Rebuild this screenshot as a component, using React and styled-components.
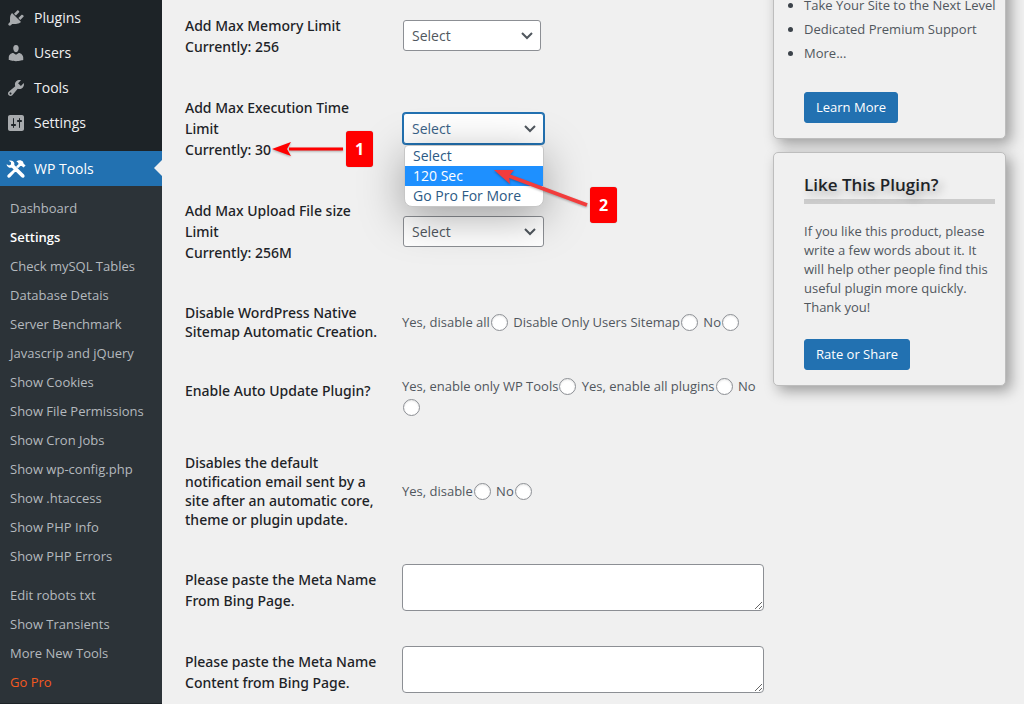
import React from 'react'

import styled, { createGlobalStyle } from "styled-components";

const Global = createGlobalStyle`
*{
box-sizing:border-box;
}
body{
margin:0;
background-color:#f0f0f0;
color:#50575e;
font-family:"Segoe UI","Open Sans","Noto Sans",sans-serif;
font-size:14px;
line-height:21px;
}
`
const Page = styled.div`
display:flex;
height:100vh;
overflow:hidden;
`
const Sidebar = styled.nav`
width:162px;
flex-shrink:0;
background-color:#1d2327;
`
const List = styled.ul`
list-style:none;
margin:0;
padding:0;
`
const MenuLink = styled.a`
position:relative;
display:flex;
align-items:center;
gap:8px;
height:35px;
padding-left:6px;
color:${({$current})=>$current ? "#fff" : "#f0f0f1"};
background-color:${({$current})=>$current ? "#2271b1" : "transparent"};
margin-top:${({$current})=>$current ? "11px" : "0"};
text-decoration:none;
svg{
color:${({$current})=>$current ? "#fff" : "#a7aaad"};
}
`
const Notch = styled.span`
position:absolute;
right:0;
top:9px;
border:8px solid transparent;
border-right-color:#f0f0f0;
border-left-width:0;
`
const SubMenu = styled(List)`
background-color:#2c3338;
padding:8px 0 6px;
`
const SubItem = styled.li`
margin-top:${({$spaced})=>$spaced ? "10px" : "0"};
`
const SubLink = styled.a`
display:block;
padding-left:10px;
font-size:13px;
line-height:29px;
text-decoration:none;
color:${({$color})=>$color || "#b4b9be"};
font-weight:${({$bold})=>$bold ? 600 : 400};
`
const Main = styled.main`
flex:1;
display:grid;
grid-template-columns:1fr 233px;
align-items:start;
gap:9px;
padding:0 18px 0 23px;
`
/* both columns are scrolled a little past their top */
const Form = styled.form`
margin-top:-5px;
`
const Row = styled.div`
position:relative;
display:grid;
grid-template-columns:217px 1fr;
`
const Label = styled.label`
padding:20px 0;
color:#1d2327;
font-family:"Segoe UI","Noto Sans","Open Sans",sans-serif;
font-weight:500;
line-height:${({$tight})=>$tight ? "19px" : "21px"};
`
const Field = styled.div`
align-self:${({$top})=>$top ? "start" : "center"};
padding:15px 0;
font-size:${({$small})=>$small ? "13px" : "14px"};
`
const SelectBox = styled.div`
position:relative;
width:${({$wide})=>$wide ? "141px" : "138px"};
margin:0 0 1px 1px;
svg{
position:absolute;
right:8px;
top:10px;
pointer-events:none;
}
`
const Select = styled.select`
display:block;
appearance:none;
width:100%;
height:31px;
padding:0 24px 0 8px;
border:1px solid ${({$open})=>$open ? "#2271b1" : "#8c8f94"};
border-radius:3px;
box-shadow:${({$open})=>$open ? "0 0 0 1px #2271b1" : "none"};
outline:none;
background-color:#fff;
color:${({$open})=>$open ? "#3a6287" : "#50575e"};
font:inherit;
`
const Options = styled.ul`
position:absolute;
z-index:1;
top:32px;
left:1px;
right:0;
margin:0;
padding:0;
list-style:none;
overflow:hidden;
background-color:#fff;
border:1px solid #c6c6c6;
border-radius:4px 4px 8px 8px;
box-shadow:0 10px 44px rgba(0,0,0,.34);
`
const Option = styled.li`
padding-left:8px;
line-height:20px;
color:${({$active})=>$active ? "#fff" : "#2c5a85"};
background-color:${({$active})=>$active ? "#1e90ff" : "transparent"};
`
const Radio = styled.input`
appearance:none;
width:17px;
height:17px;
margin:0 2px 0 1px;
vertical-align:-4px;
border:1px solid #8c8f94;
border-radius:50%;
background-color:#fff;
box-shadow:inset 0 1px 2px rgba(0,0,0,.1);
`
const TextArea = styled.textarea`
display:block;
width:100%;
height:47px;
border:1px solid #8c8f94;
border-radius:4px;
background-color:#fff;
`
const Marks = styled.svg`
position:absolute;
z-index:2;
top:0;
left:0;
overflow:visible;
pointer-events:none;
filter:drop-shadow(0 1px 1px rgba(0,0,0,.3));
`
const Badge = styled.span`
position:absolute;
z-index:2;
top:${({$top})=>$top}px;
left:${({$left})=>$left}px;
width:27px;
height:36px;
border-radius:3px;
background-color:#f00;
color:#fff;
font-size:16px;
font-weight:700;
line-height:36px;
text-align:center;
box-shadow:0 0 1px rgba(0,0,0,.4);
`
const Aside = styled.aside`
display:flex;
flex-direction:column;
gap:13px;
margin-top:-22px;
font-size:13px;
line-height:19px;
`
const Card = styled.section`
padding:14px 10px 15px 30px;
border:1px solid #bdbdbd;
border-radius:5px;
background-color:#f0f0f0;
box-shadow:5px 5px 14px rgba(0,0,0,.35);
`
const Bullets = styled.ul`
margin:0 0 27px;
padding:0;
line-height:24px;
white-space:nowrap;
li::marker{
color:#3c434a;
}
`
const Title = styled.h2`
margin:6px 0 18px;
padding-bottom:2px;
border-bottom:5px solid #ccc;
color:#1d2327;
font-size:17px;
font-weight:600;
line-height:24px;
text-shadow:4px 4px 8px rgba(0,0,0,.3);
`
const Text = styled.p`
margin:0 0 22px;
`
const Button = styled.button`
height:31px;
padding:0 11px;
border:1px solid #2271b1;
border-radius:3px;
background-color:#2271b1;
color:#fff;
font:inherit;
display:block;
`

const icons = {
  plugins: "M13.11 4.36L9.87 7.6 8 5.73l3.24-3.24c.35-.34 1.05-.2 1.56.32.52.51.66 1.21.31 1.55zm-8 1.77l.91-1.12 9.01 9.01-1.19.84c-.71.71-2.63 1.16-3.82 1.16H6.14L4.9 17.26c-.59.59-1.54.59-2.12 0-.59-.58-.59-1.53 0-2.12l1.24-1.24v-3.88c0-1.13.4-3.19 1.09-3.89zm7.26 3.97l3.24-3.24c.34-.35 1.04-.21 1.55.31.52.51.66 1.21.31 1.55l-3.24 3.25z",
  users: "M10 9.25c-2.27 0-2.73-3.44-2.73-3.44C7 4.02 7.82 2 9.97 2c2.16 0 2.98 2.02 2.71 3.81 0 0-.41 3.44-2.68 3.44zm0 2.57L12.72 10c2.39 0 4.52 2.33 4.52 4.53v2.49s-3.65 1.13-7.24 1.13c-3.65 0-7.24-1.13-7.24-1.13v-2.49c0-2.25 1.94-4.48 4.47-4.48z",
  tools: "M16.68 9.77c-1.34 1.34-3.3 1.67-4.95.99l-5.41 6.52c-.99.99-2.59.99-3.58 0s-.99-2.59 0-3.57l6.52-5.42c-.68-1.65-.35-3.61.99-4.95 1.28-1.28 3.12-1.62 4.72-1.06l-2.89 2.89 2.82 2.82 2.86-2.87c.53 1.58.18 3.39-1.08 4.65zM3.81 16.21c.4.39 1.04.39 1.43 0 .4-.4.4-1.04 0-1.43-.39-.4-1.03-.4-1.43 0-.39.39-.39 1.03 0 1.43z",
  settings: "M18 16V4c0-1.1-.9-2-2-2H4c-1.1 0-2 .9-2 2v12c0 1.1.9 2 2 2h12c1.1 0 2-.9 2-2zM8 11h1c.55 0 1 .45 1 1s-.45 1-1 1H8v1.5c0 .28-.22.5-.5.5s-.5-.22-.5-.5V13H6c-.55 0-1-.45-1-1s.45-1 1-1h1V5.5c0-.28.22-.5.5-.5s.5.22.5.5V11zm5-2h-1c-.55 0-1-.45-1-1s.45-1 1-1h1V5.5c0-.28.22-.5.5-.5s.5.22.5.5V7h1c.55 0 1 .45 1 1s-.45 1-1 1h-1v5.500c0 .28-.22.5-.5.5s-.5-.22-.5-.5V9z",
  wptools: "M.6 5.200L3 6.600 5 5.500 5 3.200 2.800 1.800C4.800 1 7.200 1.500 8.100 3.600c.4.900.4 1.700.2 2.500L18 15.400c.8.8.8 2.100.1 2.800s-2 .700-2.800-.1L5.900 8.700C3.400 9.400.700 7.700.600 5.200zM10.300 2.500C12.500.6 15.200.800 17 2.700L17.700 4.700 19.600 6.500 17.500 8.600 15.700 6.900 14.400 6.900 12 9.300 10.100 7.400 12.600 5C12.500 3.800 11.700 2.900 10.300 2.500zM8.200 9.900L10.100 11.800 4.400 18.100C3.600 18.900 2.500 18.900 1.800 18.200S1.200 16.400 1.900 15.700z",
}

const menu = [
  { name: "Plugins", icon: "plugins" },
  { name: "Users", icon: "users" },
  { name: "Tools", icon: "tools" },
  { name: "Settings", icon: "settings" },
  { name: "WP Tools", icon: "wptools", current: true },
]

const subMenu = [
  { name: "Dashboard" },
  { name: "Settings", bold: true, color: "#fff" },
  { name: "Check mySQL Tables" },
  { name: "Database Detais" },
  { name: "Server Benchmark" },
  { name: "Javascrip and jQuery" },
  { name: "Show Cookies" },
  { name: "Show File Permissions" },
  { name: "Show Cron Jobs" },
  { name: "Show wp-config.php" },
  { name: "Show .htaccess" },
  { name: "Show PHP Info" },
  { name: "Show PHP Errors" },
  { name: "Edit robots txt", spaced: true },
  { name: "Show Transients" },
  { name: "More New Tools" },
  { name: "Go Pro", color: "#f4591f" },
]

const Icon = ({ name }) => (
  <svg width="20" height="20" viewBox="0 0 20 20" fill="currentColor" aria-hidden="true">
    <path d={icons[name]} />
  </svg>
)

const Dropdown = ({ id, wide, open, children }) => (
  <SelectBox $wide={wide}>
    <Select id={id} $open={open}>
      <option>Select</option>
      <option>120 Sec</option>
      <option>Go Pro For More</option>
    </Select>
    <svg width="12" height="12" viewBox="0 0 12 12" fill="none" stroke="#50575e" strokeWidth="2" aria-hidden="true">
      <path d="M1 3l5 5 5-5" />
    </svg>
    {children}
  </SelectBox>
)

const Radios = ({ name, options }) => (
  <Field $small role="radiogroup" aria-labelledby={name}>
    {options.map((text) => (
      <React.Fragment key={text}>
        <label>{text}<Radio type="radio" name={name} /></label>{" "}
      </React.Fragment>
    ))}
  </Field>
)

const App = () => {
  return (
	<Page>
		<Global/>
		<Sidebar>
			<List>
			{menu.map((item) => (
				<li key={item.name}>
				<MenuLink href="#" $current={item.current}>
					<Icon name={item.icon}/>
					{item.name}
					{item.current && <Notch/>}
				</MenuLink>
				</li>
			))}
			</List>
			<SubMenu>
			{subMenu.map((item) => (
				<SubItem key={item.name} $spaced={item.spaced}>
				<SubLink href="#" $bold={item.bold} $color={item.color}>{item.name}</SubLink>
				</SubItem>
			))}
			</SubMenu>
		</Sidebar>
		<Main>
			<Form>
				<Row>
					<Label htmlFor="memory">Add Max Memory Limit<br/>Currently: 256</Label>
					<Field><Dropdown id="memory"/></Field>
				</Row>
				<Row>
					<Label htmlFor="time">Add Max Execution Time<br/>Limit<br/>Currently: 30</Label>
					<Field>
						<Dropdown id="time" wide open>
							<Options>
								<Option>Select</Option>
								<Option $active>120 Sec</Option>
								<Option>Go Pro For More</Option>
							</Options>
						</Dropdown>
					</Field>
					<Marks width="440" height="150" aria-hidden="true">
						<path d="M158 72H104" stroke="#f00" strokeWidth="3"/>
						<path d="M87 72l19-7-4 7 4 7z" fill="#f00"/>
						<path d="M402 128L324 99" stroke="#f23c3c" strokeWidth="4"/>
						<path d="M309 93l20 0-5 6 1 8z" fill="#f23c3c"/>
					</Marks>
					<Badge $top={54} $left={161}>1</Badge>
					<Badge $top={110} $left={405}>2</Badge>
				</Row>
				<Row>
					<Label htmlFor="upload">Add Max Upload File size<br/>Limit<br/>Currently: 256M</Label>
					<Field><Dropdown id="upload" wide/></Field>
				</Row>
				<Row>
					<Label as="div" id="sitemap" $tight>Disable WordPress Native<br/>Sitemap Automatic Creation.</Label>
					<Radios name="sitemap" options={["Yes, disable all", "Disable Only Users Sitemap", "No"]}/>
				</Row>
				<Row>
					<Label as="div" id="update" $tight>Enable Auto Update Plugin?</Label>
					<Radios name="update" options={["Yes, enable only WP Tools", "Yes, enable all plugins", "No"]}/>
				</Row>
				<Row>
					<Label as="div" id="email" $tight>Disables the default<br/>notification email sent by a<br/>site after an automatic core,<br/>theme or plugin update.</Label>
					<Radios name="email" options={["Yes, disable", "No"]}/>
				</Row>
				<Row>
					<Label htmlFor="bing-name">Please paste the Meta Name<br/>From Bing Page.</Label>
					<Field $top><TextArea id="bing-name"/></Field>
				</Row>
				<Row>
					<Label htmlFor="bing-content">Please paste the Meta Name<br/>Content from Bing Page.</Label>
					<Field $top><TextArea id="bing-content"/></Field>
				</Row>
			</Form>
			<Aside>
				<Card>
					<Bullets>
						<li>Take Your Site to the Next Level</li>
						<li>Dedicated Premium Support</li>
						<li>More...</li>
					</Bullets>
					<Button>Learn More</Button>
				</Card>
				<Card>
					<Title>Like This Plugin?</Title>
					<Text>If you like this product, please write a few words about it. It will help other people find this useful plugin more quickly. Thank you!</Text>
					<Button>Rate or Share</Button>
				</Card>
			</Aside>
		</Main>
	</Page>
  )
}

export default App
